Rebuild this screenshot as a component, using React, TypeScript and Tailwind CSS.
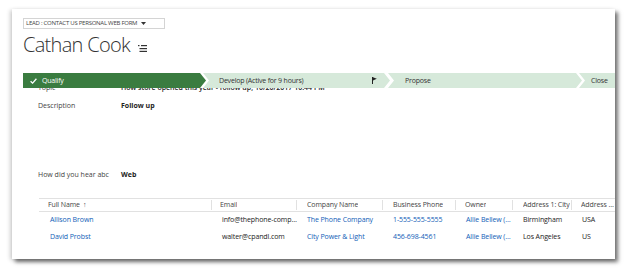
import React from "react";

const font = { fontFamily: '"Open Sans", "Noto Sans", sans-serif' };

const columns = [
  { label: "Full Name", w: "w-[173px]", pl: "pl-[9px]", sort: true },
  { label: "Email", w: "w-[85px]", pl: "pl-[8px]" },
  { label: "Company Name", w: "w-[86px]", pl: "pl-[10px]" },
  { label: "Business Phone", w: "w-[73px]", pl: "pl-[10px]" },
  { label: "Owner", w: "w-[57px]", pl: "pl-[9px]" },
  { label: "Address 1: City", w: "w-[59px]", pl: "pl-[10px]" },
  { label: "Address 1: Country", w: "flex-1", pl: "pl-[9px]" },
];

const rows = [
  ["Allison Brown", "info@thephone-company.com", "The Phone Company", "1-555-555-5555", "Allie Bellew (Sales)", "Birmingham", "USA"],
  ["David Probst", "walter@cpandl.com", "City Power & Light", "456-698-4561", "Allie Bellew (Sales)", "Los Angeles", "US"],
];

// which cells are links
const linkCols = [true, false, true, true, true, false, false];

function ListIcon() {
  return (
    <svg width="9" height="7" viewBox="0 0 9 7" className="mb-[8px] ml-[8px]">
      <rect x="0" y="0" width="1.5" height="1.2" fill="#333" />
      <rect x="3" y="0" width="6" height="1.2" fill="#333" />
      <rect x="1.5" y="3" width="7.5" height="1.2" fill="#333" />
      <rect x="1.5" y="5.8" width="7.5" height="1.2" fill="#333" />
    </svg>
  );
}

function ProcessBar() {
  return (
    <div className="flex h-[15px] text-[7px] leading-[15px] tracking-[-0.2px] text-[#333]">
      <div className="flex w-[183px] shrink-0 items-center bg-[#3a7c40] pl-[7px] text-white [clip-path:polygon(0_0,calc(100%-6px)_0,100%_50%,calc(100%-6px)_100%,0_100%)]">
        <svg width="7" height="6" viewBox="0 0 7 6">
          <path d="M0.6 3.2 L2.6 5.1 L6.4 0.8" stroke="white" strokeWidth="1.3" fill="none" />
        </svg>
        <span className="ml-[5px]">Qualify</span>
      </div>
      <div className="-ml-[3px] flex w-[187px] shrink-0 items-center justify-between bg-[#d6e9da] pl-[16px] pr-[13px] [clip-path:polygon(0_0,calc(100%-6px)_0,100%_50%,calc(100%-6px)_100%,0_100%,6px_50%)]">
        <span>Develop (Active for 9 hours)</span>
        <svg width="5" height="7" viewBox="0 0 5 7">
          <path d="M0.5 0 V7" stroke="#222" strokeWidth="1" />
          <path d="M1 0.3 L4.8 1.8 L1 3.4 Z" fill="#222" />
        </svg>
      </div>
      <div className="-ml-[2px] flex w-[194px] shrink-0 items-center bg-[#d6e9da] pl-[17px] [clip-path:polygon(0_0,calc(100%-6px)_0,100%_50%,calc(100%-6px)_100%,0_100%,6px_50%)]">
        Propose
      </div>
      <div className="-ml-[3px] flex flex-1 items-center bg-[#d6e9da] pl-[12px] [clip-path:polygon(0_0,100%_0,100%_100%,0_100%,6px_50%)]">
        Close
      </div>
    </div>
  );
}

export default function App() {
  return (
    <div className="h-[270px] w-[628px] overflow-hidden bg-white pt-[9px]" style={font}>
      <div className="ml-[12px] h-[250px] w-[603px] overflow-hidden bg-white shadow-[3px_3px_4px_rgba(0,0,0,0.55),-2px_1px_4px_rgba(0,0,0,0.18)]">
        <div className="pl-[11px] pt-[9px]">
          <div className="flex h-[11px] w-[142px] items-center border border-[#d4d4d4] pl-[2px] text-[6px] tracking-[-0.25px] text-[#444]">
            <span>LEAD : CONTACT US PERSONAL WEB FORM</span>
            <svg width="5" height="3" viewBox="0 0 5 3" className="ml-[4px]">
              <path d="M0 0 H5 L2.5 3 Z" fill="#333" />
            </svg>
          </div>
          <div className="flex h-[31px] items-end text-[20px] font-light leading-[30px] tracking-[-0.7px] text-[#333]">
            <span className="leading-[30px]">Cathan Cook</span>
            <ListIcon />
          </div>
          <div className="mt-[13px]">
            <ProcessBar />
          </div>
        </div>

        <div className="h-[110px] overflow-hidden pl-[26px] text-[7px] text-[#444]">
          <div className="-mt-[10px]">
            <div className="flex h-[20px] items-center">
              <span className="w-[83px]">Topic</span>
              <span className="font-semibold text-[#222]">How store opened this year - follow up, 10/20/2017 10:44 PM</span>
            </div>
            <div className="flex h-[70px] items-start leading-[15px]">
              <span className="w-[83px]">Description</span>
              <span className="font-bold text-[#222]">Follow up</span>
            </div>
            <div className="flex h-[15px] items-center">
              <span className="w-[83px] overflow-hidden whitespace-nowrap pr-[14px]">How did you hear abc</span>
              <span className="font-bold text-[#222]">Web</span>
            </div>
          </div>
        </div>

        <div className="ml-[27px] text-[7px] tracking-[-0.1px]">
          <div className="flex h-[14px] items-center border-y border-[#e1e1e1] text-[#444]">
            {columns.map((c, i) => (
              <div
                key={c.label}
                className={`${c.w} ${c.pl} flex h-[10px] shrink-0 items-center overflow-hidden whitespace-nowrap ${
                  i < columns.length - 1 ? "border-r border-[#e1e1e1]" : ""
                }`}
              >
                <span className="truncate">{c.label}</span>
                {c.sort && <span className="ml-[3px]">↑</span>}
              </div>
            ))}
          </div>
          {rows.map((r) => (
            <div key={r[0]} className="flex h-[17px] items-center">
              {r.map((cell, i) => (
                <div
                  key={i}
                  className={`${columns[i].w} shrink-0 truncate ${
                    i === 0 ? "pl-[11px]" : "pl-[10px]"
                  } ${linkCols[i] ? "text-[#1160b7]" : "text-[#222]"}`}
                >
                  {cell}
                </div>
              ))}
            </div>
          ))}
        </div>
      </div>
    </div>
  );
}
